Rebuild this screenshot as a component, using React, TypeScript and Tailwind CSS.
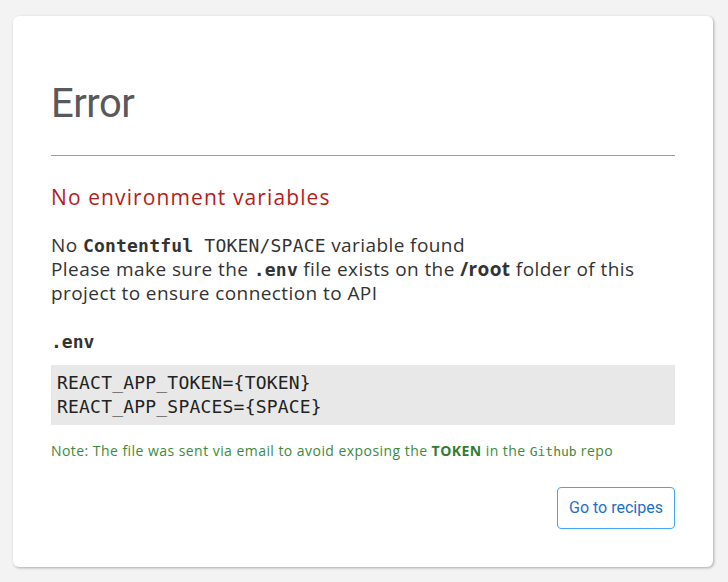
import React from 'react';

export default function App() {
  return (
    <div className="min-h-[582px] w-[728px] bg-[#f3f3f3] pt-4 pl-[13px] font-['Open_Sans',sans-serif]">
      <div className="w-[700px] rounded-md bg-white px-[38px] pt-16 pb-[38px] shadow-[1px_1px_3px_rgba(0,0,0,0.3)]">
        <h1 className="font-['Roboto',sans-serif] text-[40px] leading-[48px] font-normal tracking-[-0.5px] text-[#595959]">
          Error
        </h1>
        <hr className="mt-[27px] border-t border-[#9e9e9e]" />

        <h2 className="mt-[27px] text-[21px] leading-[28px] tracking-[1.1px] text-[#b71c1c]">
          No environment variables
        </h2>

        <p className="mt-[22px] text-[19px] leading-[24px] tracking-[0.42px] text-[#333]">
          No{' '}
          <code className="font-['DejaVu_Sans_Mono',monospace] text-[18px] leading-none tracking-[0.2px]">
            <b>Contentful</b> TOKEN/SPACE
          </code>{' '}
          variable found
          <br />
          Please make sure the{' '}
          <code className="font-['DejaVu_Sans_Mono',monospace] text-[18px] leading-none font-bold tracking-[0.2px]">
            .env
          </code>{' '}
          file exists on the <b>/root</b> folder of this
          <br />
          project to ensure connection to API
        </p>

        <div className="mt-[25px] font-['DejaVu_Sans_Mono',monospace] text-[18px] leading-[24px] font-bold text-[#333]">
          .env
        </div>

        <pre className="mt-[11px] bg-[#e8e8e8] p-[6px] font-['DejaVu_Sans_Mono',monospace] text-[18px] leading-[24px] tracking-[0.2px] text-[#222]">
          {'REACT_APP_TOKEN={TOKEN}\nREACT_APP_SPACES={SPACE}'}
        </pre>

        <p className="mt-4 text-[14px] leading-[20px] tracking-[0.45px] text-[#3c8a3c]">
          Note: The file was sent via email to avoid exposing the <b className="text-[#2e7d32]">TOKEN</b> in the{' '}
          <code className="font-['DejaVu_Sans_Mono',monospace] text-[13px] leading-none tracking-normal">Github</code> repo
        </p>

        <div className="mt-[26px] flex justify-end">
          <button className="h-[42px] w-[118px] rounded border border-[#42a5f5] bg-white font-['Roboto',sans-serif] text-[16px] text-[#1e6fc8]">
            Go to recipes
          </button>
        </div>
      </div>
    </div>
  );
}
